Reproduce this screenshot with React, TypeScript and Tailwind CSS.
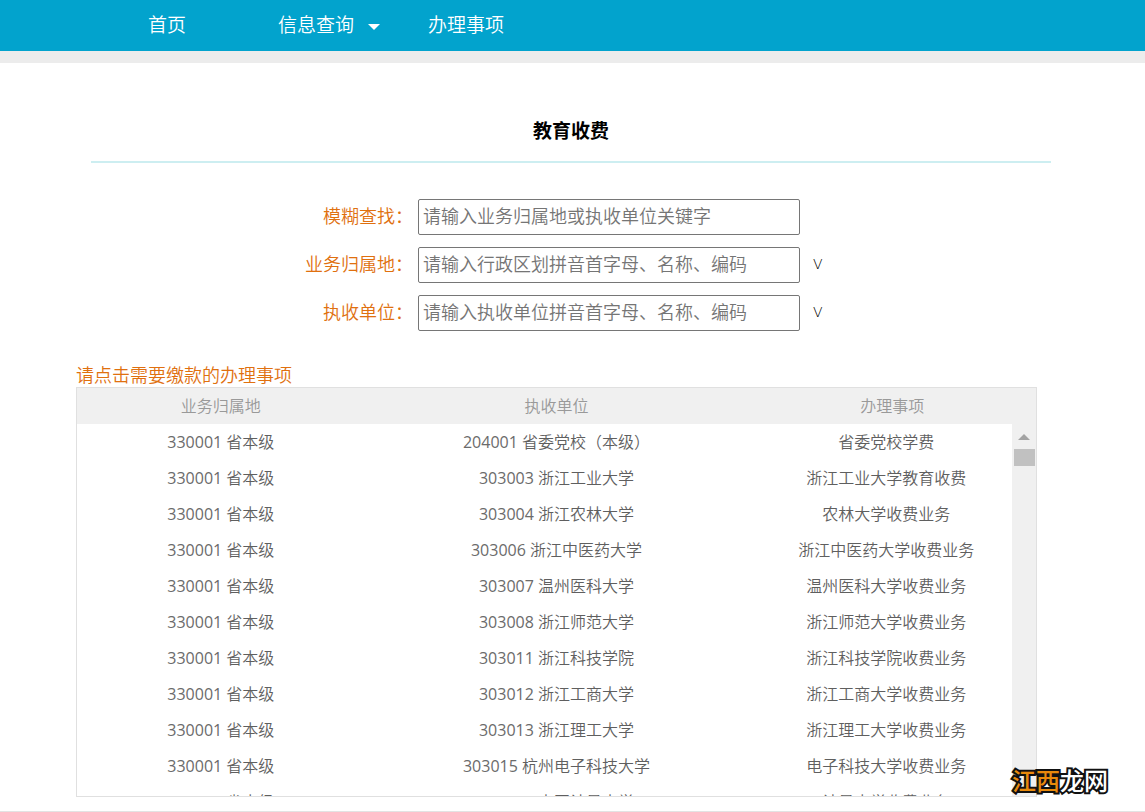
import { useState } from "react";

const navItems = [
  { label: "首页", className: "flex w-[130px] items-center" },
  { label: "信息查询", className: "flex w-[150px] items-center gap-[14px]", hasMenu: true },
  { label: "办理事项", className: "flex w-[150px] items-center" },
];

const fields = [
  { id: "keyword", label: "模糊查找：", placeholder: "请输入业务归属地或执收单位关键字", hasList: false },
  { id: "region", label: "业务归属地：", placeholder: "请输入行政区划拼音首字母、名称、编码", hasList: true },
  { id: "unit", label: "执收单位：", placeholder: "请输入执收单位拼音首字母、名称、编码", hasList: true },
];

const rows = [
  { code: "204001", unit: "省委党校（本级）", item: "省委党校学费" },
  { code: "303003", unit: "浙江工业大学", item: "浙江工业大学教育收费" },
  { code: "303004", unit: "浙江农林大学", item: "农林大学收费业务" },
  { code: "303006", unit: "浙江中医药大学", item: "浙江中医药大学收费业务" },
  { code: "303007", unit: "温州医科大学", item: "温州医科大学收费业务" },
  { code: "303008", unit: "浙江师范大学", item: "浙江师范大学收费业务" },
  { code: "303011", unit: "浙江科技学院", item: "浙江科技学院收费业务" },
  { code: "303012", unit: "浙江工商大学", item: "浙江工商大学收费业务" },
  { code: "303013", unit: "浙江理工大学", item: "浙江理工大学收费业务" },
  { code: "303015", unit: "杭州电子科技大学", item: "电子科技大学收费业务" },
  { code: "303016", unit: "中国计量大学", item: "计量大学收费业务" },
];

const NavBar = () => (
  <nav className="flex h-[51px] items-center bg-[#02a3cd] pl-[148px] text-[19px] font-[350] text-white">
    {navItems.map((item) => (
      <a key={item.label} href="#" className={item.className}>
        {item.label}
        {item.hasMenu && (
          <svg width="12" height="6" viewBox="0 0 12 6" className="mt-[2px] fill-white">
            <path d="M0 0h12L6 6z" />
          </svg>
        )}
      </a>
    ))}
  </nav>
);

const SearchForm = () => {
  const [values, setValues] = useState<Record<string, string>>({});

  return (
    <form className="mx-auto mt-9 flex w-[532px] flex-col gap-3 text-[18px]">
      {fields.map((field) => (
        <div key={field.id} className="flex h-9 items-center">
          <label htmlFor={field.id} className="w-[108px] pb-[2px] text-right font-[350] text-[#e0700f]">
            {field.label}
          </label>
          <input
            id={field.id}
            type="text"
            value={values[field.id] ?? ""}
            onChange={(e) => setValues({ ...values, [field.id]: e.target.value })}
            placeholder={field.placeholder}
            className="ml-[5px] h-9 w-[382px] rounded-[2px] border border-[#767676] px-1 pb-[2px] font-[350] placeholder:text-[#757575]"
          />
          {field.hasList && (
            <button
              type="button"
              aria-label="展开列表"
              className="ml-[13px] pb-[2px] font-['DejaVu_Sans',sans-serif] text-sm font-extralight text-black"
            >
              V
            </button>
          )}
        </div>
      ))}
    </form>
  );
};

const ItemTable = () => (
  <div className="relative h-[410px] overflow-hidden border border-[#e0e0e0]">
    <table className="w-full table-fixed text-center text-base font-[350]">
      <thead>
        <tr className="h-9 bg-[#f0f0f0] text-[#999]">
          <th className="w-[30%] font-[350]">业务归属地</th>
          <th className="w-[40%] font-[350]">执收单位</th>
          <th className="w-[30%] font-[350]">办理事项</th>
        </tr>
      </thead>
      <tbody className="text-[#5f5f5f]">
        {rows.map((row) => (
          <tr key={row.code} className="h-9">
            <td>
              <span className="font-normal text-[#6b6b6b]">330001</span> 省本级
            </td>
            <td>
              <span className="font-normal text-[#6b6b6b]">{row.code}</span> {row.unit}
            </td>
            <td className="pr-3">{row.item}</td>
          </tr>
        ))}
      </tbody>
    </table>

    {/* scrollbar */}
    <div className="absolute top-9 right-0 bottom-0 flex w-6 flex-col items-center bg-[#f0f0f0] pt-[10px]">
      <svg width="12" height="6" viewBox="0 0 12 6" className="fill-[#a3a3a3]">
        <path d="M0 6h12L6 0z" />
      </svg>
      <div className="mt-[9px] h-[17px] w-[21px] bg-[#c1c1c1]" />
    </div>
  </div>
);

export default function App() {
  return (
    <div className="relative bg-white font-['Open_Sans','Noto_Sans_CJK_SC',sans-serif]">
      <NavBar />
      <div className="h-3 bg-[#ececec]" />

      <main className="border-b border-[#e3e3e3] pb-[14px]">
        <section className="pr-[94px] pl-[91px]">
          <h1 className="border-b-2 border-[#cdeef1] pt-[54px] pb-4 text-center text-[19px] leading-7 font-bold text-black">
            教育收费
          </h1>
          <SearchForm />
        </section>

        <section className="mt-8 pr-[108px] pl-[76px]">
          <p className="text-[18px] leading-6 font-[350] text-[#e0700f]">请点击需要缴款的办理事项</p>
          <ItemTable />
        </section>
      </main>

      <div className="absolute right-[37px] bottom-[13px] text-2xl leading-9 font-medium text-white [-webkit-text-stroke:4px_#111] [paint-order:stroke_fill]">
        <span className="text-[#e8890c]">江西</span>龙网
      </div>
    </div>
  );
}
